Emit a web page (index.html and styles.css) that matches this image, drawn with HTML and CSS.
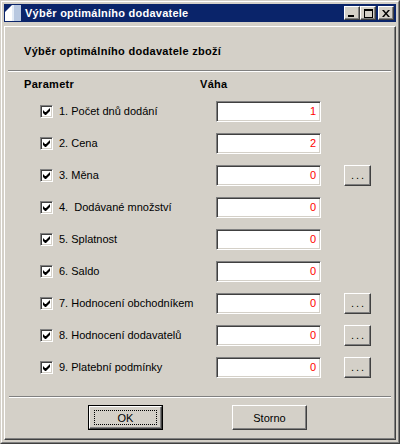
FILE: index.html
```html
<!DOCTYPE html>
<html>
<head>
<meta charset="utf-8">
<link rel="stylesheet" href="styles.css">
</head>
<body>
<div class="window">
  <div class="frame">
    <div class="titlebar">
      <svg class="appicon" width="16" height="16" viewBox="0 0 16 16">
        <polygon points="0,7 7,0 9,0 9,16 0,16" fill="#ffffff"/>
        <polygon points="9,0 16,0 16,16 9,16" fill="#b8c8e0"/>
        <polygon points="7,0 9,0 9,16 7,16" fill="#e4ecf6"/>
      </svg>
      <span class="title">Výběr optimálního dodavatele</span>
      <div class="capbtns">
        <div class="capbtn"><svg width="8" height="7" viewBox="0 0 8 7"><rect x="0" y="5" width="6" height="2" fill="#000"/></svg></div>
        <div class="capbtn"><svg width="9" height="9" viewBox="0 0 9 9"><rect x="0.5" y="1" width="8" height="7.5" fill="none" stroke="#000" stroke-width="1"/><rect x="0" y="0" width="9" height="2" fill="#000"/></svg></div>
        <div class="capbtn close"><svg width="8" height="7" viewBox="0 0 8 7"><path d="M0,0h2l2,2.5l2,-2.5h2l-3,3.5l3,3.5h-2l-2,-2.5l-2,2.5h-2l3,-3.5z" fill="#000"/></svg></div>
      </div>
    </div>
    <div class="panel">
      <div class="heading">Výběr optimálního dodavatele zboží</div>
      <div class="sep top"></div>
      <div class="colhead">
        <span class="colparam">Parametr</span>
        <span class="colweight">Váha</span>
      </div>
      <div class="rows">
        <div class="row"><span class="check"><svg width="7" height="7" viewBox="0 0 7 7"><path d="M0,2v3l2,2h1l4,-4v-3l-4,4h-1z" fill="#000"/></svg></span><span class="label">1. Počet dnů dodání</span><span class="field">1</span></div>
        <div class="row"><span class="check"><svg width="7" height="7" viewBox="0 0 7 7"><path d="M0,2v3l2,2h1l4,-4v-3l-4,4h-1z" fill="#000"/></svg></span><span class="label">2. Cena</span><span class="field">2</span></div>
        <div class="row"><span class="check"><svg width="7" height="7" viewBox="0 0 7 7"><path d="M0,2v3l2,2h1l4,-4v-3l-4,4h-1z" fill="#000"/></svg></span><span class="label">3. Měna</span><span class="field">0</span><span class="btn dots">...</span></div>
        <div class="row"><span class="check"><svg width="7" height="7" viewBox="0 0 7 7"><path d="M0,2v3l2,2h1l4,-4v-3l-4,4h-1z" fill="#000"/></svg></span><span class="label">4.&nbsp; Dodávané množství</span><span class="field">0</span></div>
        <div class="row"><span class="check"><svg width="7" height="7" viewBox="0 0 7 7"><path d="M0,2v3l2,2h1l4,-4v-3l-4,4h-1z" fill="#000"/></svg></span><span class="label">5. Splatnost</span><span class="field">0</span></div>
        <div class="row"><span class="check"><svg width="7" height="7" viewBox="0 0 7 7"><path d="M0,2v3l2,2h1l4,-4v-3l-4,4h-1z" fill="#000"/></svg></span><span class="label">6. Saldo</span><span class="field">0</span></div>
        <div class="row"><span class="check"><svg width="7" height="7" viewBox="0 0 7 7"><path d="M0,2v3l2,2h1l4,-4v-3l-4,4h-1z" fill="#000"/></svg></span><span class="label">7. Hodnocení obchodníkem</span><span class="field">0</span><span class="btn dots">...</span></div>
        <div class="row"><span class="check"><svg width="7" height="7" viewBox="0 0 7 7"><path d="M0,2v3l2,2h1l4,-4v-3l-4,4h-1z" fill="#000"/></svg></span><span class="label">8. Hodnocení dodavatelů</span><span class="field">0</span><span class="btn dots">...</span></div>
        <div class="row"><span class="check"><svg width="7" height="7" viewBox="0 0 7 7"><path d="M0,2v3l2,2h1l4,-4v-3l-4,4h-1z" fill="#000"/></svg></span><span class="label">9. Platební podmínky</span><span class="field">0</span><span class="btn dots">...</span></div>
      </div>
      <div class="sep bottom"></div>
      <div class="actions">
        <div class="defbtn"><div class="btn big"><span class="focus">OK</span></div></div>
        <div class="btn big storno">Storno</div>
      </div>
    </div>
  </div>
</div>
</body>
</html>
```

FILE: styles.css
```css
html, body {
  margin: 0;
  padding: 0;
  background: #d4d0c8;
}
body {
  font-family: "Liberation Sans", Arial, sans-serif;
  font-size: 11px;
  color: #000;
}
.window {
  width: 400px;
  height: 444px;
  box-sizing: border-box;
  border: 1px solid;
  border-color: #d4d0c8 #404040 #404040 #d4d0c8;
  background: #d4d0c8;
}
.frame {
  height: 100%;
  box-sizing: border-box;
  border: 1px solid;
  border-color: #ffffff #808080 #808080 #ffffff;
  padding: 2px;
  display: flex;
  flex-direction: column;
}
.titlebar {
  height: 18px;
  background: #0a246a;
  display: flex;
  align-items: center;
  flex-shrink: 0;
}
.appicon {
  margin-left: 1px;
  margin-right: 4px;
  flex-shrink: 0;
}
.title {
  color: #fff;
  font-weight: bold;
  font-size: 11px;
  line-height: 13px;
  letter-spacing: 0.25px;
}
.capbtns {
  margin-left: auto;
  margin-right: 2px;
  display: flex;
  gap: 0;
}
.capbtn {
  width: 16px;
  height: 14px;
  box-sizing: border-box;
  border: 1px solid;
  border-color: #ffffff #404040 #404040 #ffffff;
  box-shadow: inset -1px -1px #808080;
  background: #d4d0c8;
  display: flex;
  align-items: center;
  justify-content: center;
}
.capbtn.close {
  margin-left: 2px;
}
.panel {
  margin-top: 4px;
  flex: 1;
  box-sizing: border-box;
  border: 1px solid;
  border-color: #ffffff #404040 #404040 #ffffff;
  box-shadow: inset -1px -1px #808080;
  display: flex;
  flex-direction: column;
}
.heading {
  font-weight: bold;
  line-height: 13px;
  margin-top: 18px;
  padding-left: 19px;
  letter-spacing: 0.3px;
}
.sep {
  border-top: 1px solid #808080;
  border-bottom: 1px solid #ffffff;
  height: 0;
}
.sep.top {
  margin: 12px 4px 0 3px;
}
.sep.bottom {
  margin: 18px 4px 0 4px;
}
.colhead {
  display: flex;
  font-weight: bold;
  line-height: 13px;
  margin-top: 6px;
  padding-left: 19px;
  letter-spacing: 0.3px;
}
.colparam {
  width: 176px;
}
.rows {
  margin-top: 10px;
  display: flex;
  flex-direction: column;
  gap: 11px;
}
.row {
  height: 21px;
  display: flex;
  align-items: center;
  padding-left: 35px;
}
.check {
  width: 13px;
  height: 13px;
  box-sizing: border-box;
  border: 1px solid;
  border-color: #808080 #ffffff #ffffff #808080;
  box-shadow: inset 1px 1px #404040, inset -1px -1px #d4d0c8;
  background: #fff;
  display: flex;
  align-items: center;
  justify-content: center;
  flex-shrink: 0;
}
.label {
  margin-left: 6px;
  width: 157px;
  line-height: 13px;
  white-space: nowrap;
}
.field {
  width: 105px;
  height: 21px;
  box-sizing: border-box;
  border: 1px solid;
  border-color: #808080 #ffffff #ffffff #808080;
  box-shadow: inset 1px 1px #404040, inset -1px -1px #d4d0c8;
  background: #fff;
  color: #ff0000;
  text-align: right;
  padding-right: 4px;
  line-height: 19px;
  font-size: 11px;
}
.btn {
  box-sizing: border-box;
  border: 1px solid;
  border-color: #ffffff #404040 #404040 #ffffff;
  box-shadow: inset -1px -1px #808080;
  background: #d4d0c8;
  display: flex;
  align-items: center;
  justify-content: center;
}
.dots {
  margin-left: 23px;
  width: 27px;
  height: 21px;
  letter-spacing: 2px;
  padding-left: 2px;
  line-height: 13px;
}
.actions {
  display: flex;
  margin-top: 7px;
  padding-left: 83px;
}
.defbtn {
  border: 1px solid #000;
  width: 75px;
  height: 25px;
  box-sizing: border-box;
}
.defbtn .btn {
  width: 100%;
  height: 100%;
}
.big {
  width: 75px;
  height: 25px;
  font-size: 11px;
}
.focus {
  box-sizing: border-box;
  width: 63px;
  height: 15px;
  border: 1px dotted #000;
  display: flex;
  align-items: center;
  justify-content: center;
}
.storno {
  margin-left: 69px;
}
```
